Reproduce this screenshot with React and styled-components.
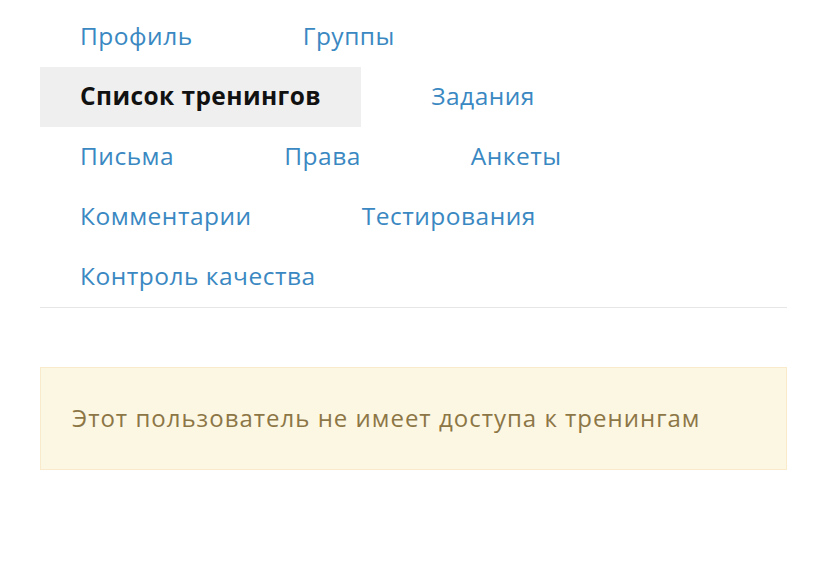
import styled, { createGlobalStyle } from 'styled-components'

const GlobalStyle = createGlobalStyle`
  html, body {
    margin: 0;
    padding: 0;
    background: #fff;
  }
  body {
    font-family: "Open Sans", "Noto Sans", sans-serif;
  }
`

const rows = [
  ['Профиль', 'Группы'],
  ['Список тренингов', 'Задания'],
  ['Письма', 'Права', 'Анкеты'],
  ['Комментарии', 'Тестирования'],
  ['Контроль качества'],
]

const ACTIVE = 'Список тренингов'

const Page = styled.div`
  padding: 7px 40px 0;
  width: 747px;
`

const TabList = styled.nav`
  display: flex;
  flex-direction: column;
  border-bottom: 1px solid #e6e6e6;
`

const TabRow = styled.div`
  display: flex;
`

const Tab = styled.a`
  display: flex;
  align-items: center;
  height: 60px;
  box-sizing: border-box;
  padding: 0 40px 4px;
  margin-right: 30px;
  font-size: 24.5px;
  white-space: nowrap;
  letter-spacing: ${({active}) => active ? '0.42px' : '0.5px'};
  color: ${({active}) => active ? '#111' : '#3a88c2'};
  font-weight: ${({active}) => active ? 700 : 400};
  background: ${({active}) => active ? '#efefef' : 'transparent'};
  cursor: pointer;
`

const Alert = styled.div`
  margin-top: 59px;
  height: 103px;
  box-sizing: border-box;
  display: flex;
  align-items: center;
  padding: 0 31px 2px;
  background: #fcf7e3;
  border: 1px solid #f8eacb;
  color: #8c7646;
  font-size: 24px;
  letter-spacing: 1px;
`

const App = () =>
  <Page>
    <GlobalStyle />
    <TabList>
      {rows.map((row, i) =>
        <TabRow key={i}>
          {row.map(t =>
            <Tab key={t} active={t === ACTIVE}>{t}</Tab>
          )}
        </TabRow>
      )}
    </TabList>
    <Alert>Этот пользователь не имеет доступа к тренингам</Alert>
  </Page>

export default App
